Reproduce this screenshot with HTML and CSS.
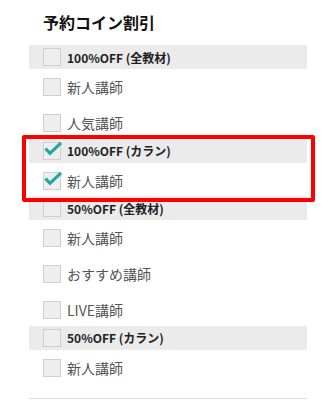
FILE: index.html
```html
<!DOCTYPE html>
<html lang="ja">
<head>
<meta charset="utf-8">
<link rel="stylesheet" href="styles.css">
</head>
<body>
<div class="panel">
  <h2 class="title">予約コイン割引</h2>

  <div class="head"><span class="box"></span><span>100%OFF (全教材)</span></div>
  <div class="group">
    <div class="item"><span class="box"></span><span>新人講師</span></div>
    <div class="item"><span class="box"></span><span>人気講師</span></div>
  </div>

  <div class="head"><span class="box checked"><svg class="tick" viewBox="0 0 18 18"><path d="M2.5 6.5 L7 11.3 L18 0.8"/></svg></span><span>100%OFF (カラン)</span></div>
  <div class="group">
    <div class="item"><span class="box checked"><svg class="tick" viewBox="0 0 18 18"><path d="M2.5 6.5 L7 11.3 L18 0.8"/></svg></span><span>新人講師</span></div>
  </div>

  <div class="head"><span class="box"></span><span>50%OFF (全教材)</span></div>
  <div class="group">
    <div class="item"><span class="box"></span><span>新人講師</span></div>
    <div class="item"><span class="box"></span><span>おすすめ講師</span></div>
    <div class="item"><span class="box"></span><span>LIVE講師</span></div>
  </div>

  <div class="head"><span class="box"></span><span>50%OFF (カラン)</span></div>
  <div class="group last">
    <div class="item"><span class="box"></span><span>新人講師</span></div>
  </div>

  <div class="highlight"></div>
</div>
</body>
</html>
```
FILE: styles.css
```css
html, body {
  margin: 0;
  padding: 0;
  background: #fff;
}
body {
  font-family: "Noto Sans CJK JP", "Noto Sans", sans-serif;
}
.panel {
  position: relative;
  margin-left: 29px;
  width: 278px;
  border-bottom: 1px solid #dddddd;
}
.title {
  margin: 0;
  padding: 12px 14px 13px;
  font-size: 16px;
  line-height: 20px;
  font-weight: bold;
  color: #111;
}
.head {
  display: flex;
  align-items: center;
  gap: 6px;
  height: 24px;
  padding-left: 14px;
  background: #ebebeb;
  font-size: 12px;
  font-weight: bold;
  color: #222;
}
.group {
  display: flex;
  flex-direction: column;
  gap: 18px;
  padding: 9px 0 6.5px 14px;
}
.group.last {
  padding-bottom: 21px;
}
.item {
  display: flex;
  align-items: center;
  gap: 6px;
  height: 18px;
  font-size: 14px;
  color: #555;
}
.box {
  position: relative;
  flex: none;
  width: 18px;
  height: 18px;
  box-sizing: border-box;
  border: 1px solid #cfcfcf;
  background: #eeeeee;
}
.tick {
  position: absolute;
  left: -1px;
  top: -1px;
  width: 18px;
  height: 18px;
  overflow: visible;
  fill: none;
  stroke: #22a5a5;
  stroke-width: 3.2;
}
.highlight {
  position: absolute;
  left: -7px;
  top: 135px;
  width: 293px;
  height: 67px;
  box-sizing: border-box;
  border: 4px solid #ff0000;
  border-radius: 2px;
}
```
